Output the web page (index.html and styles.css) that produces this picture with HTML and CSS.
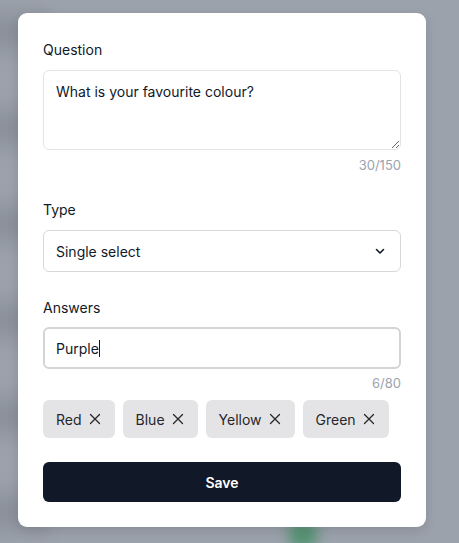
FILE: index.html
```html
<!DOCTYPE html>
<html lang="en">
<head>
<meta charset="utf-8">
<title>Edit question</title>
<link rel="stylesheet" href="styles.css">
</head>
<body>
<div class="backdrop">
  <div class="bg-rows"></div>
  <div class="bg-blob"></div>
</div>
<div class="overlay">
  <form class="card">
    <div class="field">
      <label class="label">Question</label>
      <textarea class="textarea">What is your favourite colour?</textarea>
      <div class="counter first">30/150</div>
    </div>
    <div class="field">
      <label class="label">Type</label>
      <div class="select">
        <span>Single select</span>
        <svg class="chev" width="12" height="12" viewBox="0 0 12 12"><path d="M2.5 4.5 L6 8 L9.5 4.5" fill="none" stroke="#111827" stroke-width="1.6" stroke-linecap="round" stroke-linejoin="round"/></svg>
      </div>
    </div>
    <div class="field">
      <label class="label">Answers</label>
      <div class="input"><span>Purple</span><span class="caret"></span></div>
      <div class="counter">6/80</div>
      <div class="chips">
        <span class="chip">Red<svg class="x" width="16" height="16" viewBox="0 0 16 16"><path d="M3.5 3.5 L12.5 12.5 M12.5 3.5 L3.5 12.5" stroke="#27272a" stroke-width="1.3" stroke-linecap="round"/></svg></span>
        <span class="chip">Blue<svg class="x" width="16" height="16" viewBox="0 0 16 16"><path d="M3.5 3.5 L12.5 12.5 M12.5 3.5 L3.5 12.5" stroke="#27272a" stroke-width="1.3" stroke-linecap="round"/></svg></span>
        <span class="chip">Yellow<svg class="x" width="16" height="16" viewBox="0 0 16 16"><path d="M3.5 3.5 L12.5 12.5 M12.5 3.5 L3.5 12.5" stroke="#27272a" stroke-width="1.3" stroke-linecap="round"/></svg></span>
        <span class="chip">Green<svg class="x" width="16" height="16" viewBox="0 0 16 16"><path d="M3.5 3.5 L12.5 12.5 M12.5 3.5 L3.5 12.5" stroke="#27272a" stroke-width="1.3" stroke-linecap="round"/></svg></span>
      </div>
    </div>
    <button type="button" class="save">Save</button>
  </form>
</div>
</body>
</html>
```

FILE: styles.css
```css
* { box-sizing: border-box; }
html, body { margin: 0; height: 100%; }
body {
  background: #9ca2ac;
  font-family: Inter, "Noto Sans", "Liberation Sans", sans-serif;
  color: #111827;
  overflow: hidden;
  position: relative;
}
.backdrop {
  position: absolute;
  inset: 0;
  overflow: hidden;
}
.bg-rows {
  position: absolute;
  left: -10px;
  top: 0;
  width: 60px;
  height: 100%;
  background: repeating-linear-gradient(180deg,
    rgba(120,126,136,0) 0px,
    rgba(120,126,136,0.9) 32px,
    rgba(120,126,136,0) 64px,
    rgba(120,126,136,0) 96px);
  filter: blur(6px);
  opacity: 0.6;
}
.bg-blob {
  position: absolute;
  left: 288px;
  top: 520px;
  width: 30px;
  height: 30px;
  border-radius: 50%;
  background: #3f8f62;
  filter: blur(7px);
  opacity: 0.8;
}
.overlay {
  position: relative;
  padding: 13px 33px 16px 18px;
}
.card {
  background: #ffffff;
  border-radius: 9px;
  padding: 27px 25px 25px 25px;
  box-shadow: 0 4px 12px rgba(0,0,0,0.12);
  display: flex;
  flex-direction: column;
}
.field { display: flex; flex-direction: column; }
.field + .field { margin-top: 26px; }
.label {
  font-size: 14px;
  line-height: 20px;
  font-weight: 400;
  color: #111827;
  margin-bottom: 10px;
}
.textarea {
  display: block;
  width: 100%;
  height: 80px;
  border: 1px solid #e4e4e7;
  border-radius: 6px;
  padding: 11px 12px;
  font-family: inherit;
  font-size: 14px;
  line-height: 20px;
  color: #111827;
  resize: vertical;
  outline: none;
  background: #fff;
}
.counter {
  margin-top: 5px;
  font-size: 13px;
  line-height: 18px;
  color: #9ca3af;
  text-align: right;
}
.counter.first { margin-top: 6px; }
.select {
  height: 42px;
  border: 1px solid #d8d8dc;
  border-radius: 6px;
  padding: 0 14px 0 12px;
  display: flex;
  align-items: center;
  justify-content: space-between;
  font-size: 14px;
}
.chev { display: block; }
.input {
  height: 42px;
  border: 2px solid #d4d4d8;
  border-radius: 6px;
  padding: 0 11px;
  display: flex;
  align-items: center;
  font-size: 14px;
  margin-top: -1px;
}
.caret {
  display: inline-block;
  width: 1px;
  height: 17px;
  background: #111827;
}
.chips {
  margin-top: 8px;
  display: flex;
  gap: 8px;
  flex-wrap: wrap;
}
.chip {
  height: 38px;
  background: #e4e4e7;
  border-radius: 6px;
  padding: 0 12px 0 13px;
  display: inline-flex;
  align-items: center;
  gap: 5px;
  font-size: 14px;
  color: #27272a;
}
.x { display: block; }
.save {
  margin-top: 24px;
  height: 40px;
  width: 100%;
  border: 0;
  border-radius: 6px;
  background: #111827;
  color: #ffffff;
  font-family: inherit;
  font-size: 14px;
  font-weight: 600;
}
```
